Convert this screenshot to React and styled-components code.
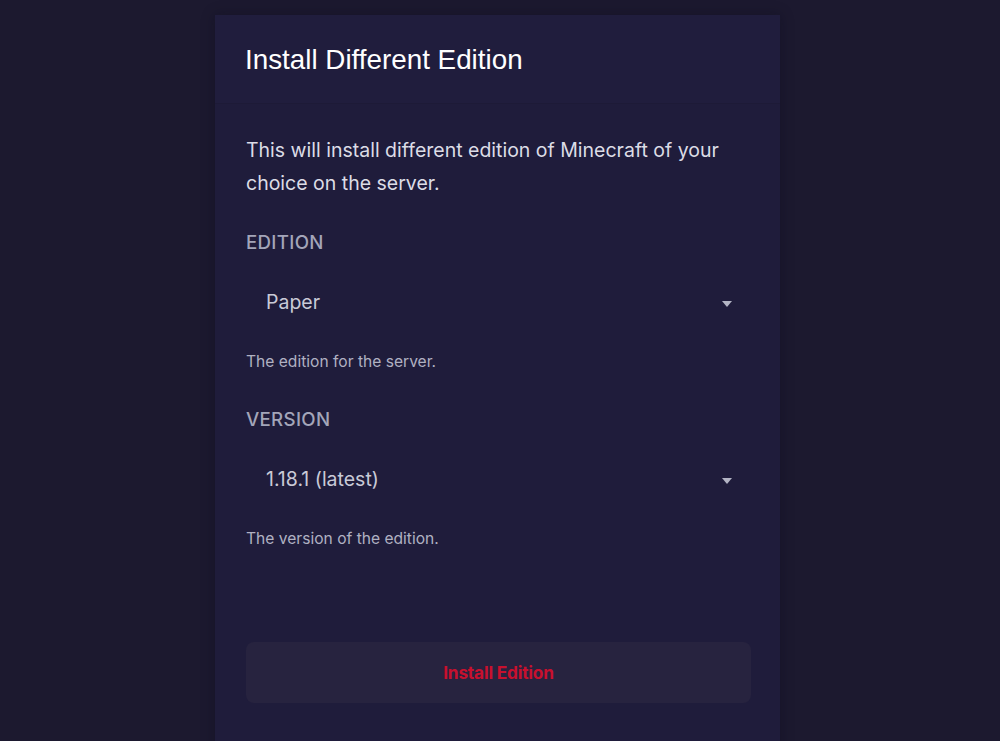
import React from 'react';
import styled, { createGlobalStyle } from 'styled-components';

const GlobalStyle = createGlobalStyle`
  html, body {
    margin: 0;
    padding: 0;
    background: #1c192f;
    overflow: hidden;
  }
`;

const Page = styled.div`
  display: flex;
  justify-content: center;
  padding-top: 15px;
  padding-right: 5px;
  height: 741px;
  box-sizing: border-box;
`;

const Card = styled.div`
  width: 565px;
  height: 760px;
  background: #1f1c3b;
  box-shadow: 0 0 12px rgba(10, 8, 25, 0.35);
`;

const Header = styled.div`
  display: flex;
  align-items: center;
  height: 88px;
  padding: 0 30px;
  background: #201d3d;
  border-bottom: 1px solid #1d1a37;
`;

const Title = styled.h2`
  margin: 0;
  padding-top: 2px;
  font-family: "Liberation Sans", Arial, sans-serif;
  font-weight: 400;
  font-size: 27.8px;
  color: #ffffff;
`;

const Body = styled.div`
  padding: 30px 28px 0 31px;
  font-family: Inter, "Noto Sans", sans-serif;
`;

const Description = styled.p`
  margin: 0;
  font-size: 19.5px;
  line-height: 33px;
  color: #dcdce6;
`;

const Field = styled.div`
  margin-top: ${(p) => p.gap}px;
`;

const Label = styled.div`
  font-size: 18.7px;
  line-height: 24px;
  font-weight: 500;
  letter-spacing: 0.3px;
  color: #a3a5b9;
`;

const Select = styled.div`
  display: flex;
  align-items: center;
  justify-content: space-between;
  height: 50px;
  margin-top: 22px;
  padding: 0 20px 0 20px;
  font-size: 19.5px;
  color: #c9cad7;
`;

const Arrow = styled.span`
  width: 0;
  height: 0;
  border-left: 5px solid transparent;
  border-right: 5px solid transparent;
  border-top: 6px solid #b3b4c4;
  margin-top: 4px;
`;

const Help = styled.div`
  margin-top: 25px;
  font-size: 15.6px;
  line-height: 20px;
  color: #b0b1c2;
`;

const Button = styled.button`
  display: block;
  width: 505px;
  height: 61px;
  margin-top: 93px;
  border: none;
  border-radius: 8px;
  background: #27233f;
  color: #c8102e;
  font-family: Inter, "Noto Sans", sans-serif;
  font-weight: 700;
  font-size: 17.3px;
  letter-spacing: -0.2px;
  cursor: pointer;
`;

const fields = [
  { label: 'EDITION', value: 'Paper', help: 'The edition for the server.', gap: 31 },
  { label: 'VERSION', value: '1.18.1 (latest)', help: 'The version of the edition.', gap: 36 },
];

export default function App() {
  return (
    <>
      <GlobalStyle />
      <Page>
        <Card>
          <Header>
            <Title>Install Different Edition</Title>
          </Header>
          <Body>
            <Description>
              This will install different edition of Minecraft of your choice on the server.
            </Description>
            {fields.map((f) => (
              <Field key={f.label} gap={f.gap}>
                <Label>{f.label}</Label>
                <Select>
                  <span>{f.value}</span>
                  <Arrow />
                </Select>
                <Help>{f.help}</Help>
              </Field>
            ))}
            <Button>Install Edition</Button>
          </Body>
        </Card>
      </Page>
    </>
  );
}
